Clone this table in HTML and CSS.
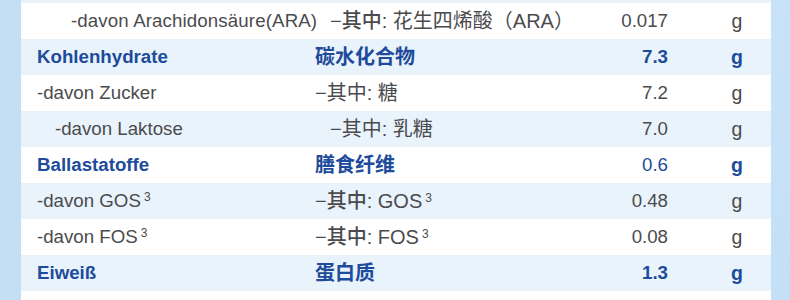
FILE: index.html
```html
<!DOCTYPE html>
<html lang="de">
<head>
<meta charset="utf-8">
<title>Nährwerte</title>
<link rel="stylesheet" href="styles.css">
</head>
<body>
<div class="frame">
  <div class="side side-left"></div>
  <div class="table">
    <div class="row alt top-cut"></div>
    <div class="row">
      <div class="c de ind2"><span class="wide">-davon Arachidonsäure(ARA)</span></div>
      <div class="c zh ind1"><span class="pre">−其中:</span> 花生四烯酸（ARA）</div>
      <div class="c val">0.017</div>
      <div class="c unit">g</div>
    </div>
    <div class="row alt head">
      <div class="c de">Kohlenhydrate</div>
      <div class="c zh">碳水化合物</div>
      <div class="c val">7.3</div>
      <div class="c unit">g</div>
    </div>
    <div class="row">
      <div class="c de">-davon Zucker</div>
      <div class="c zh">−其中: 糖</div>
      <div class="c val">7.2</div>
      <div class="c unit">g</div>
    </div>
    <div class="row alt">
      <div class="c de ind1">-davon Laktose</div>
      <div class="c zh ind1">−其中: 乳糖</div>
      <div class="c val">7.0</div>
      <div class="c unit">g</div>
    </div>
    <div class="row head">
      <div class="c de">Ballastatoffe</div>
      <div class="c zh">膳食纤维</div>
      <div class="c val light">0.6</div>
      <div class="c unit">g</div>
    </div>
    <div class="row alt">
      <div class="c de">-davon GOS<sup class="sup">3</sup></div>
      <div class="c zh"><span class="pre">−其中:</span> GOS<sup class="sup">3</sup></div>
      <div class="c val">0.48</div>
      <div class="c unit">g</div>
    </div>
    <div class="row">
      <div class="c de">-davon FOS<sup class="sup">3</sup></div>
      <div class="c zh"><span class="pre">−其中:</span> FOS<sup class="sup">3</sup></div>
      <div class="c val">0.08</div>
      <div class="c unit">g</div>
    </div>
    <div class="row alt head">
      <div class="c de">Eiweiß</div>
      <div class="c zh">蛋白质</div>
      <div class="c val">1.3</div>
      <div class="c unit">g</div>
    </div>
    <div class="row head last">
      <div class="c de">Vitamine</div>
      <div class="c zh">维生素</div>
      <div class="c val"></div>
      <div class="c unit"></div>
    </div>
  </div>
  <div class="side side-right"></div>
</div>
</body>
</html>
```
FILE: styles.css
```css
* { box-sizing: border-box; }
html, body {
  margin: 0;
  padding: 0;
  background: #ffffff;
  overflow: hidden;
}
.frame {
  display: flex;
  width: 790px;
  height: 300px;
  overflow: hidden;
}
.side-left {
  width: 21px;
  flex: none;
  background: #c4dff4;
}
.side-right {
  width: 19px;
  flex: none;
  background: linear-gradient(180deg, #c8e3f8 0%, #c4e0f6 100%);
}
.table {
  width: 750px;
  flex: none;
  display: flex;
  flex-direction: column;
  font-family: "Liberation Sans", "Noto Sans CJK SC", sans-serif;
  font-size: 18.7px;
  color: #4b4b4d;
}
.row {
  flex: none;
  display: grid;
  grid-template-columns: 278px 263px 90px 103px;
  align-items: center;
  height: 36px;
  padding-left: 16px;
  background: #ffffff;
  white-space: nowrap;
}
.row.alt { background: #e9f3fc; }
.row.top-cut { height: 3px; }
.row.last { align-items: start; padding-top: 10px; }
.c { line-height: 20px; overflow: visible; }
.zh { font-size: 20px; }
.de.ind1 { padding-left: 18px; }
.de.ind2 { padding-left: 34px; }
.zh.ind1 { padding-left: 15px; }
.wide { letter-spacing: 0.12px; }
.val { text-align: right; }
.unit { text-align: center; padding-left: 35px; font-size: 19.5px; }
.head { color: #1e4b9b; font-weight: 700; }
.val.light { font-weight: 400; }
.pre { font-weight: 500; }
.sup {
  font-size: 12px;
  vertical-align: 6px;
  line-height: 0;
  margin-left: 3px;
}
```
